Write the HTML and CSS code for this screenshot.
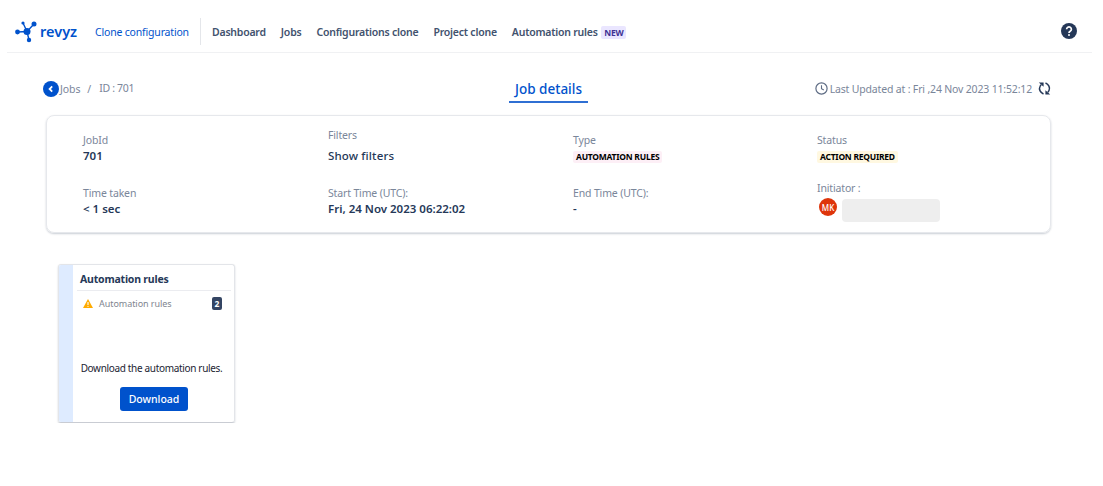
FILE: index.html
```html
<!DOCTYPE html>
<html>

<head>
  <meta charset="utf-8">
  <title>Job details</title>
  <link rel="stylesheet" href="styles.css">
</head>

<body>
  <div class="top-nav">
    <a class="logo">
      <svg width="36" height="24" viewBox="0 0 36 24">
        <g stroke="#0052cc" stroke-width="1.400">
          <path d="M12 11.500L2.500 12M12 11.500L8 3M12 11.500L19 4M12 11.500L14 20" />
        </g>
        <g fill="#0052cc">
          <circle cx="12" cy="11.500" r="3.500" />
          <circle cx="2.500" cy="12" r="2.400" />
          <circle cx="8" cy="3" r="1.600" />
          <circle cx="19" cy="4" r="2.500" />
          <circle cx="14" cy="20" r="2.200" />
        </g>
      </svg>
      <span>revyz</span>
    </a>
    <a class="app-name">Clone configuration</a>
    <div class="nav-links">
      <a>Dashboard</a>
      <a>Jobs</a>
      <a>Configurations clone</a>
      <a>Project clone</a>
      <a>Automation rules <span class="new-tag">NEW</span></a>
    </div>
    <svg class="help" width="16" height="16" viewBox="0 0 16 16">
      <circle cx="8" cy="8" r="8" fill="#253858" />
      <path d="M5.600 6.200a2.400 2.300 0 1 1 3.600 2c-.8.500-1.200.9-1.200 1.700" fill="none" stroke="#fff" stroke-width="1.700" />
      <circle cx="8" cy="12" r="1" fill="#fff" />
    </svg>
  </div>

  <div class="page">
    <div class="page-head">
      <div class="crumbs">
        <svg width="16" height="16" viewBox="0 0 16 16">
          <circle cx="8" cy="8" r="8" fill="#0052cc" />
          <path d="M9.200 5.400L6.600 8l2.600 2.600" fill="none" stroke="#fff" stroke-width="1.800" />
        </svg>
        <span class="crumb-jobs">Jobs</span>
        <span class="crumb-sep">/</span>
        <span class="crumb-id">ID : 701</span>
      </div>
      <div class="page-title"><span>Job details</span></div>
      <div class="updated">
        <svg width="13" height="13" viewBox="0 0 13 13">
          <circle cx="6.500" cy="6.500" r="5.600" fill="none" stroke="#5e6c84" stroke-width="1.200" />
          <path d="M6.500 3.200v3.500l2.300 1.300" fill="none" stroke="#5e6c84" stroke-width="1.100" />
        </svg>
        <span>Last Updated at : Fri ,24 Nov 2023 11:52:12</span>
        <svg class="refresh" width="13" height="13" viewBox="0 0 13 13">
          <g fill="none" stroke="#253858" stroke-width="1.500">
            <path d="M5.500 12C2.500 10.800 .5 7.500 2 4.500 2.300 3.800 2.700 3.300 3.200 2.800" />
            <path d="M7.500 1C10.500 2.200 12.500 5.500 11 8.500 10.700 9.200 10.300 9.700 9.800 10.200" />
          </g>
          <path d="M.8 .5H5.600V4.800zM12.200 12.500H7.400V8.200z" fill="#253858" />
        </svg>
      </div>
    </div>

    <div class="info-card">
      <div class="info-item">
        <div class="label">JobId</div>
        <div class="value">701</div>
      </div>
      <div class="info-item up">
        <div class="label">Filters</div>
        <div class="value link">Show filters</div>
      </div>
      <div class="info-item">
        <div class="label">Type</div>
        <div class="value"><span class="lozenge pink">AUTOMATION RULES</span></div>
      </div>
      <div class="info-item">
        <div class="label">Status</div>
        <div class="value"><span class="lozenge yellow">ACTION REQUIRED</span></div>
      </div>
      <div class="info-item">
        <div class="label">Time taken</div>
        <div class="value">&lt; 1 sec</div>
      </div>
      <div class="info-item">
        <div class="label">Start Time (UTC):</div>
        <div class="value">Fri, 24 Nov 2023 06:22:02</div>
      </div>
      <div class="info-item">
        <div class="label">End Time (UTC):</div>
        <div class="value">-</div>
      </div>
      <div class="info-item up">
        <div class="label">Initiator :</div>
        <div class="initiator">
          <span class="avatar">MK</span>
          <span class="name-blur"></span>
        </div>
      </div>
    </div>

    <div class="task-card">
      <div class="task-strip"></div>
      <div class="task-body">
        <div class="task-title">Automation rules</div>
        <div class="task-row">
          <svg width="10" height="9" viewBox="0 0 10 9">
            <path d="M5 0L10 9H0z" fill="#ffab00" />
            <path d="M5 3v3" stroke="#fff" stroke-width="1.100" />
            <circle cx="5" cy="7.300" r=".6" fill="#fff" />
          </svg>
          <span class="task-name">Automation rules</span>
          <span class="count">2</span>
        </div>
        <p class="task-note">Download the automation rules.</p>
        <button class="btn-primary">Download</button>
      </div>
    </div>
  </div>
</body>

</html>
```

FILE: styles.css
```css
* {
  margin: 0;
  padding: 0;
  box-sizing: border-box;
}

body {
  font-family: "Noto Sans", "Open Sans", sans-serif;
  color: #172b4d;
  background: #fff;
}

.top-nav {
  display: flex;
  align-items: center;
  height: 53px;
  margin: 0 11px 0 7px;
  padding: 11px 0 0 8px;
  border-bottom: 1px solid #f0f1f3;
}

.logo {
  display: flex;
  align-items: center;
  width: 80px;
  color: #0052cc;
  font-size: 14.500px;
  font-weight: 600;
}

.logo svg {
  margin-right: -11px;
  flex: none;
}

.logo span {
  margin-top: -2px;
}

.app-name {
  width: 105px;
  color: #0052cc;
  font-size: 10.500px;
  letter-spacing: -.18px;
  white-space: nowrap;
}

.nav-links {
  display: flex;
  align-items: center;
  gap: 15px;
  height: 27px;
  padding-left: 11px;
  border-left: 1px solid #e4e6ea;
  color: #42526e;
  font-size: 10.500px;
  font-weight: 600;
  letter-spacing: -.22px;
  white-space: nowrap;
}

.new-tag {
  margin-left: 1px;
  padding: 1px 3px;
  border-radius: 2px;
  background: #eae6ff;
  color: #403294;
  font-size: 8.500px;
  font-weight: 700;
}

.help {
  margin-left: auto;
  margin-right: 15px;
  margin-top: -1px;
}

.page {
  padding: 0 52px 0 46px;
}

.page-head {
  display: grid;
  grid-template-columns: 1fr auto 1fr;
  align-items: center;
  height: 53px;
  padding-top: 23px;
}

.crumbs {
  display: flex;
  align-items: center;
  margin: -5px 0 0 -3px;
  color: #7a869a;
  font-size: 10.500px;
  letter-spacing: -.1px;
}

.crumb-jobs {
  margin: 1px 0 0 1px;
}

.crumb-sep {
  margin: 1px 8px 0 7px;
}

.crumb-id {
  margin-top: -1px;
  letter-spacing: -.3px;
}

.page-title {
  text-align: center;
  color: #0052cc;
  font-size: 13.500px;
  font-weight: 500;
}

.page-title span {
  display: inline-block;
  padding: 0 6px 3px;
  border-bottom: 2px solid #2f6fd3;
}

.updated {
  display: flex;
  align-items: center;
  justify-content: flex-end;
  gap: 2px;
  margin-top: -5px;
  color: #7a869a;
  font-size: 10.500px;
  letter-spacing: -.17px;
}

.refresh {
  margin-left: 4px;
}

.info-card {
  display: grid;
  grid-template-columns: 245px 245px 244px 1fr;
  grid-auto-rows: 53px;
  height: 118px;
  margin-top: 9px;
  padding: 17px 36px 0;
  border: 1px solid #e6e8ec;
  border-radius: 8px;
  box-shadow: 0 1px 2px rgba(9, 30, 66, .22);
}

.info-item {
  display: flex;
  flex-direction: column;
}

.info-item.up {
  margin-top: -5px;
}

.label {
  color: #7a869a;
  font-size: 10.500px;
  letter-spacing: -.15px;
  line-height: 15px;
}

.value {
  color: #253858;
  font-size: 11.500px;
  font-weight: 600;
  line-height: 16px;
}

.info-item.up .value {
  margin-top: 5px;
}

.value.link {
  font-weight: 500;
  letter-spacing: .15px;
}

.lozenge {
  display: inline-block;
  padding: 0 3px;
  border-radius: 2px;
  color: #000;
  font-size: 8.500px;
  font-weight: 700;
  letter-spacing: -.25px;
  line-height: 12px;
}

.pink {
  background: #fdeff6;
}

.yellow {
  background: #fff8e1;
}

.initiator {
  display: flex;
  gap: 5px;
  margin-top: 2px;
  padding-left: 2px;
}

.avatar {
  display: flex;
  align-items: center;
  justify-content: center;
  width: 18px;
  height: 18px;
  border-radius: 50%;
  background: #de350b;
  color: #fff;
  font-size: 8px;
  font-weight: 500;
}

.name-blur {
  width: 98px;
  height: 23px;
  margin-top: 1px;
  border-radius: 4px;
  background: #eeeeee;
}

.task-card {
  display: flex;
  width: 177px;
  height: 159px;
  margin: 31px 0 0 12px;
  border: 1px solid #e3e5e9;
  border-bottom-color: #c9ccd3;
  border-radius: 3px;
  box-shadow: 0 1px 2px rgba(9, 30, 66, .2);
  overflow: hidden;
}

.task-strip {
  width: 14px;
  background: #deebff;
}

.task-body {
  flex: 1;
  display: flex;
  flex-direction: column;
  padding: 0 3px 0 4px;
}

.task-title {
  height: 26px;
  padding: 7px 0 0 3px;
  border-bottom: 1px solid #ebecf0;
  color: #253858;
  font-size: 10.500px;
  font-weight: 700;
  letter-spacing: -.2px;
  line-height: 14px;
}

.task-row {
  display: flex;
  align-items: center;
  height: 14px;
  margin-top: 5px;
  padding: 0 9px 0 6px;
}

.task-name {
  margin-left: 6px;
  color: #80858f;
  font-size: 9px;
  letter-spacing: -.05px;
}

.count {
  width: 10px;
  height: 13px;
  margin-left: auto;
  border-radius: 2px;
  background: #344563;
  color: #fff;
  font-size: 8.500px;
  font-weight: 700;
  line-height: 13px;
  text-align: center;
}

.task-note {
  margin-top: 51px;
  padding-right: 5px;
  color: #1c2433;
  font-size: 10px;
  letter-spacing: -.33px;
  line-height: 14px;
  text-align: center;
  white-space: nowrap;
}

.btn-primary {
  align-self: center;
  width: 68px;
  height: 24px;
  margin-top: 12px;
  border: 0;
  border-radius: 3px;
  background: #0052cc;
  color: #fff;
  font-family: inherit;
  font-size: 10.500px;
  font-weight: 500;
}
```
